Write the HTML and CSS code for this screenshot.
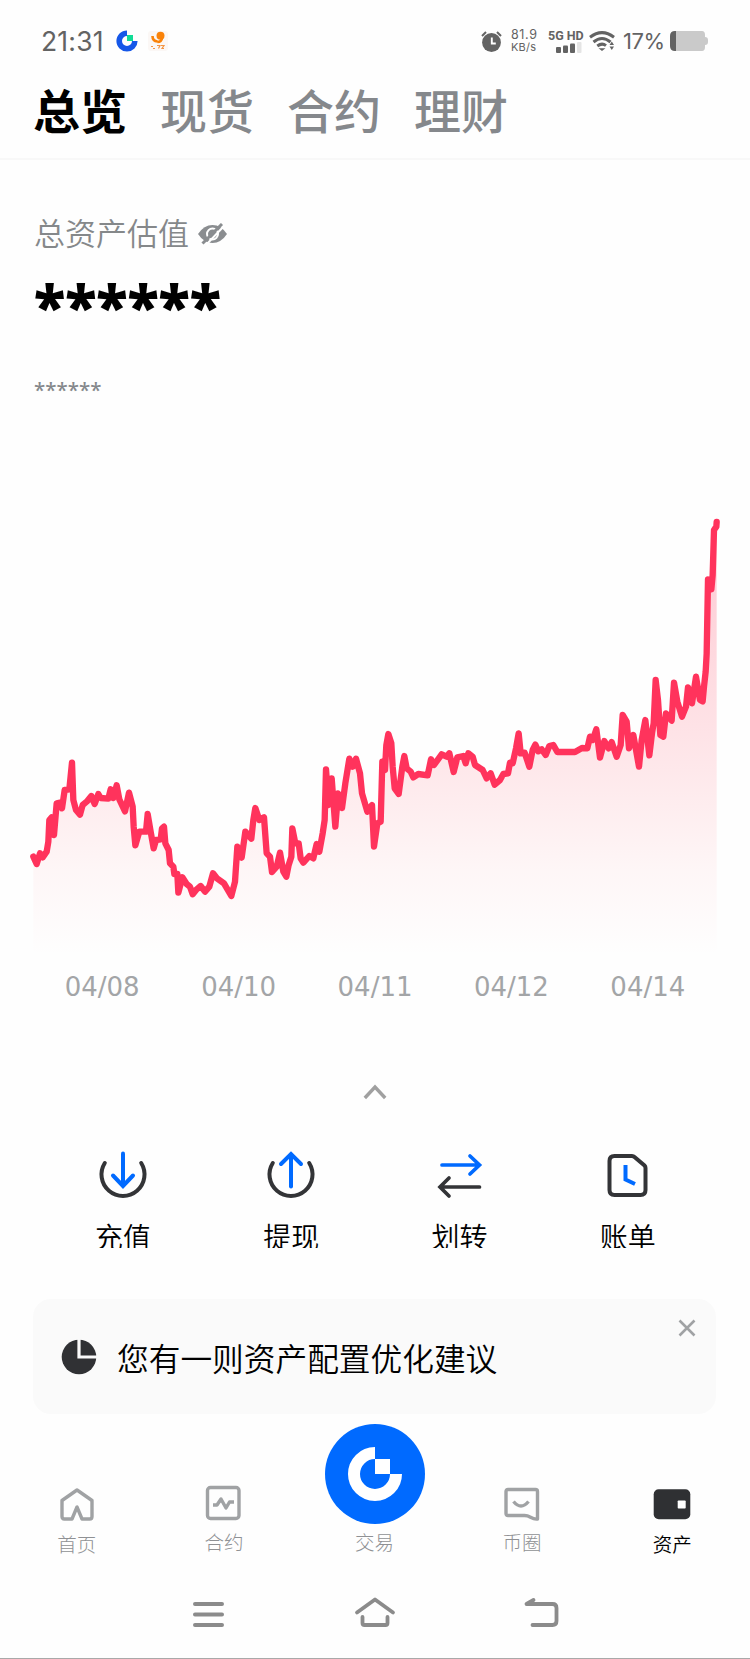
FILE: index.html
```html
<!DOCTYPE html>
<html lang="zh-CN">
<head>
<meta charset="utf-8">
<title>资产总览</title>
<link rel="stylesheet" href="styles.css">
</head>
<body>
<div class="screen">
  <header class="status">
    <span class="clock">21:31</span>
    <svg class="brand-mini" width="22" height="22" viewBox="0 0 22 22"><path d="M11 3.2A7.8 7.8 0 1 0 18.8 11" fill="none" stroke="#1557e8" stroke-width="5.6"/><path d="M11 5h6v6h-6z" fill="#10dc96"/></svg>
    <svg class="app-mini" width="20" height="20" viewBox="0 0 20 20"><rect width="20" height="20" rx="3" fill="#fbf7f5"/><circle cx="12.5" cy="4.800" r="4" fill="#fa8208"/><path d="M4.500 5q0 5 5 5.500M9.500 11q4 0 4.500-4" fill="none" stroke="#fa8208" stroke-width="2.600"/><path d="M3 15.500h2M5 17.500h2M9 14.500h3l-1.500 3M13 14.500h3l-2 3h2" fill="none" stroke="#f49543" stroke-width="1.200"/></svg>
    <span class="spacer"></span>
    <svg class="alarm" width="21" height="21" viewBox="0 0 21 21"><circle cx="10.5" cy="11.5" r="9.4" fill="#636363"/><path d="M1 5 5 1M20 5 16 1" stroke="#636363" stroke-width="2"/><path d="M10.8 6.5v6h4" fill="none" stroke="#fff" stroke-width="1.9"/></svg>
    <div class="speed"><span>81.9</span><span>KB/s</span></div>
    <div class="cell"><span>5G HD</span>
      <svg width="26" height="11" viewBox="0 0 26 11"><g fill="#636363"><rect y="5" width="5" height="6" rx="1"/><rect x="7" y="3.5" width="5" height="7.5" rx="1"/><rect x="14" y="1.5" width="5" height="9.5" rx="1"/></g><rect x="21" width="4.5" height="11" rx="1" fill="#e4e4e4"/></svg>
    </div>
    <svg class="wifi" width="26" height="20" viewBox="0 0 26 20"><g fill="none" stroke="#636363" stroke-width="3"><path d="M1 6.2Q13-3 25 6.2"/><path d="M4.5 11Q13 4 21.5 11"/><path d="M8.3 15Q13 11.500 17 14.600"/></g><path d="M9.500 17.200h7L13 20zM20.500 14l2.300-3.500L25 14zM20.500 15.500l2.300 3.500L25 15.500z" fill="#636363"/></svg>
    <span class="percent">17%</span>
    <svg class="battery" width="38" height="20" viewBox="0 0 38 20"><path d="M4 0h28q3 0 3 4v2q3 0 3 3v2q0 3-3 3v2q0 4-3 4H4z" fill="#cacaca"/><path d="M6 0v20H5q-5 0-5-5V5q0-5 5-5z" fill="#636363"/></svg>
  </header>

  <nav class="tabs">
    <a class="tab tab-active">总览</a><a class="tab">现货</a><a class="tab">合约</a><a class="tab">理财</a>
  </nav>

  <section class="balance">
    <div class="balance-label"><span>总资产估值</span>
      <svg width="29" height="22" viewBox="0 0 29 22"><path d="M0 11Q6 2 14.500 2T29 11Q23 20 14.500 20T0 11z" fill="#8a8d90"/><circle cx="14.500" cy="11" r="5.500" fill="none" stroke="#fff" stroke-width="2"/><path d="M8 22 27 2" stroke="#fff" stroke-width="2"/><path d="M4.500 20.500 24 1" stroke="#8a8d90" stroke-width="3"/></svg>
    </div>
    <div class="balance-main">******</div>
    <div class="balance-sub">******</div>
  </section>

  <svg class="chart" width="750" height="460" viewBox="0 0 2250 1380">
    <defs>
      <linearGradient id="fade" gradientUnits="userSpaceOnUse" x1="0" y1="60" x2="0" y2="1370">
        <stop offset="0" stop-color="#ff335c" stop-opacity=".27"/>
        <stop offset=".5" stop-color="#ff3350" stop-opacity=".13"/>
        <stop offset=".8" stop-color="#ff3344" stop-opacity=".04"/>
        <stop offset="1" stop-color="#ff3344" stop-opacity="0"/>
      </linearGradient>
      <path id="trend" d="M100 1070L110 1092 120 1060 128 1072 140 1055 145 1025 148 960 155 952 162 1005 170 910 180 908 186 925 194 870 208 868 216 788 220 900 228 930 240 944 248 915 260 905 274 888 284 912 295 882 302 894 325 896 332 868 340 894 350 856 358 898 375 934 387 878 398 920 401 980 406 1036 418 995 438 995 443 942 452 995 461 1045 468 1020 482 1018 486 985 492 980 496 1030 506 1050 510 1090 520 1100 523 1122 532 1122 535 1178 547 1132 560 1152 570 1160 578 1183 590 1168 602 1158 615 1175 628 1160 639 1120 652 1136 672 1150 694 1188 705 1145 712 1040 725 1073 736 995 754 1016 760 960 766 924 778 960 792 952 800 1060 810 1070 816 1116 830 1100 840 1058 850 1115 859 1130 866 1095 874 1070 877 985 886 1030 896 1030 902 1075 910 1088 928 1068 940 1075 950 1032 958 1055 968 1000 974 960 978 808 986 915 995 835 1006 980 1014 880 1026 924 1036 850 1048 776 1058 800 1068 776 1080 820 1086 880 1102 935 1116 915 1122 1040 1132 970 1142 965 1147 785 1155 810 1159 735 1165 702 1174 730 1178 800 1184 865 1196 882 1207 800 1213 768 1220 805 1232 815 1240 832 1255 822 1283 826 1293 778 1302 795 1325 763 1340 770 1348 760 1361 816 1372 772 1390 768 1397 790 1405 760 1418 770 1425 795 1448 810 1460 835 1472 820 1484 854 1500 840 1510 822 1524 820 1530 788 1538 790 1548 745 1556 700 1562 760 1574 758 1588 800 1598 750 1606 734 1615 754 1625 748 1637 765 1648 738 1660 735 1672 756 1725 756 1746 744 1762 745 1770 710 1778 720 1789 688 1800 773 1813 723 1826 745 1835 726 1850 770 1862 735 1868 645 1880 665 1887 745 1900 705 1917 800 1925 720 1936 660 1948 766 1956 700 1961 670 1967 540 1974 600 1981 705 1990 710 1998 640 2015 662 2022 548 2032 605 2046 650 2058 620 2064 562 2076 610 2088 530 2100 600 2108 604 2112 560 2117 515 2120 460 2124 238 2134 268 2138 225 2142 90 2149 80 2150 66"/>
    </defs>
    <path d="M100 1070L110 1092 120 1060 128 1072 140 1055 145 1025 148 960 155 952 162 1005 170 910 180 908 186 925 194 870 208 868 216 788 220 900 228 930 240 944 248 915 260 905 274 888 284 912 295 882 302 894 325 896 332 868 340 894 350 856 358 898 375 934 387 878 398 920 401 980 406 1036 418 995 438 995 443 942 452 995 461 1045 468 1020 482 1018 486 985 492 980 496 1030 506 1050 510 1090 520 1100 523 1122 532 1122 535 1178 547 1132 560 1152 570 1160 578 1183 590 1168 602 1158 615 1175 628 1160 639 1120 652 1136 672 1150 694 1188 705 1145 712 1040 725 1073 736 995 754 1016 760 960 766 924 778 960 792 952 800 1060 810 1070 816 1116 830 1100 840 1058 850 1115 859 1130 866 1095 874 1070 877 985 886 1030 896 1030 902 1075 910 1088 928 1068 940 1075 950 1032 958 1055 968 1000 974 960 978 808 986 915 995 835 1006 980 1014 880 1026 924 1036 850 1048 776 1058 800 1068 776 1080 820 1086 880 1102 935 1116 915 1122 1040 1132 970 1142 965 1147 785 1155 810 1159 735 1165 702 1174 730 1178 800 1184 865 1196 882 1207 800 1213 768 1220 805 1232 815 1240 832 1255 822 1283 826 1293 778 1302 795 1325 763 1340 770 1348 760 1361 816 1372 772 1390 768 1397 790 1405 760 1418 770 1425 795 1448 810 1460 835 1472 820 1484 854 1500 840 1510 822 1524 820 1530 788 1538 790 1548 745 1556 700 1562 760 1574 758 1588 800 1598 750 1606 734 1615 754 1625 748 1637 765 1648 738 1660 735 1672 756 1725 756 1746 744 1762 745 1770 710 1778 720 1789 688 1800 773 1813 723 1826 745 1835 726 1850 770 1862 735 1868 645 1880 665 1887 745 1900 705 1917 800 1925 720 1936 660 1948 766 1956 700 1961 670 1967 540 1974 600 1981 705 1990 710 1998 640 2015 662 2022 548 2032 605 2046 650 2058 620 2064 562 2076 610 2088 530 2100 600 2108 604 2112 560 2117 515 2120 460 2124 238 2134 268 2138 225 2142 90 2149 80 2150 66V1370H100z" fill="url(#fade)"/>
    <use href="#trend" fill="none" stroke="#ff335c" stroke-width="19" stroke-linecap="round" stroke-linejoin="round"/>
  </svg>
  <div class="dates"><span>04/08</span><span>04/10</span><span>04/11</span><span>04/12</span><span>04/14</span></div>

  <div class="collapse"><svg width="24" height="16" viewBox="0 0 24 16"><path d="M1.800 14 12 3l10.200 11" fill="none" stroke="#a0a0a0" stroke-width="3.400"/></svg></div>

  <section class="actions">
    <div class="action">
      <svg width="50" height="50" viewBox="0 0 50 50" fill="none" stroke-width="4" stroke-linecap="round"><path d="M6.800 13A21.500 21.500 0 1 0 43.200 13" stroke="#333437"/><path d="M25 3.500v32" stroke="#006aff"/><path d="M15 25.500 25 36l10-10.500" stroke="#006aff"/></svg>
      <span>充值</span></div>
    <div class="action">
      <svg width="50" height="50" viewBox="0 0 50 50" fill="none" stroke-width="4" stroke-linecap="round"><path d="M6.800 13A21.500 21.500 0 1 0 43.200 13" stroke="#333437"/><path d="M25 4.500v32" stroke="#006aff"/><path d="M15 14 25 4l10 10" stroke="#006aff"/></svg>
      <span>提现</span></div>
    <div class="action">
      <svg width="50" height="50" viewBox="0 0 50 50" fill="none" stroke-width="3.700" stroke-linecap="round"><path d="M7 15H44M35 6l9.500 9-9.500 9" stroke="#006aff"/><path d="M44.500 37H6M14 28l-9 9 9 9" stroke="#333437"/></svg>
      <span>划转</span></div>
    <div class="action">
      <svg width="50" height="50" viewBox="0 0 50 50" fill="none" stroke-width="4"><path d="M11.500 6H29q1.500 0 2.500 1l10 8.500q1 1 1 2.500v22q0 5-5 5h-26q-5 0-5-5V11q0-5 5-5z" stroke="#333437"/><path d="M22.500 15v14.500l9.500 4.500" stroke="#006aff"/></svg>
      <span>账单</span></div>
  </section>

  <aside class="notice">
    <svg class="pie" width="36" height="36" viewBox="0 0 36 36"><circle cx="18" cy="18" r="17.300" fill="#303134"/><path d="M18 0v18h18" fill="none" stroke="#fafafa" stroke-width="3.200"/></svg>
    <span class="notice-text">您有一则资产配置优化建议</span>
    <svg class="close" width="18" height="18" viewBox="0 0 18 18"><path d="M1.500 1.500l15 15M16.500 1.500l-15 15" stroke="#a0a2a4" stroke-width="2.600"/></svg>
  </aside>

  <nav class="bottom">
    <div class="item">
      <svg width="38" height="38" viewBox="0 0 38 38" fill="none" stroke="#a0a2a4" stroke-width="3.400" stroke-linejoin="round"><path d="M19 6 34 16.500V32.500q0 2.500-2.300 2.500H24L19 23l-5 12H6.300Q4 35 4 32.500V16.500z"/></svg>
      <span>首页</span></div>
    <div class="item item-raised">
      <svg width="38" height="38" viewBox="0 0 38 38" fill="none" stroke="#a0a2a4" stroke-width="3.400"><rect x="2.500" y="3.500" width="31.500" height="31" rx="3"/><path d="M8 21h4l4-6 5 9 3.500-6H29" stroke-linejoin="round"/></svg>
      <span>合约</span></div>
    <div class="item item-trade">
      <div class="trade"><svg width="54" height="54" viewBox="0 0 54 54"><path d="M27 6A21 21 0 1 0 48 27" fill="none" stroke="#fff" stroke-width="12"/><path d="M27 12h15v15H27z" fill="#fff"/></svg></div>
      <span>交易</span></div>
    <div class="item item-raised">
      <svg width="38" height="38" viewBox="0 0 38 38" fill="none" stroke="#a0a2a4" stroke-width="3.400" stroke-linejoin="round"><path d="M5 5.500h27.500q2 0 2 2V35q-3 .5-7-1.800-3-1.700-6-1.700H5q-2 0-2-2v-22q0-2 2-2z"/><path d="M10.500 17.500q7.500 9 15 0"/></svg>
      <span>币圈</span></div>
    <div class="item item-active">
      <svg width="38" height="38" viewBox="0 0 38 38"><rect x=".7" y="5.200" width="36.600" height="30" rx="5" fill="#2f3033"/><rect x="24.700" y="16.500" width="8" height="8" rx=".8" fill="#fff"/></svg>
      <span>资产</span></div>
  </nav>

  <footer class="system">
    <svg width="42" height="38" viewBox="0 0 42 38" fill="none" stroke="#8b8b8b" stroke-width="4" stroke-linecap="round"><path d="M8 9h27M8 19.500h27M8 30h27"/></svg>
    <svg width="42" height="38" viewBox="0 0 42 38" fill="none" stroke="#8b8b8b" stroke-width="3.800" stroke-linecap="round" stroke-linejoin="round"><path d="M3 17.500 21 4.500l18 13M8.500 22v6q0 2 2 2h21q2 0 2-2v-6"/></svg>
    <svg width="42" height="38" viewBox="0 0 42 38" fill="none" stroke="#8b8b8b" stroke-width="3.800" stroke-linecap="round" stroke-linejoin="round"><path d="M11.500 30h20q4 0 4-4V13q0-4-4-4h-26l7-4"/></svg>
  </footer>
</div>
</body>
</html>
```

FILE: styles.css
```css
* { box-sizing: border-box; }
body {
  margin: 0;
  background: #fefefe;
  color: #000;
  font-family: "Noto Sans CJK SC", sans-serif;
}
svg { display: block; flex: none; }
.screen {
  width: 750px;
  height: 1659px;
  display: flex;
  flex-direction: column;
  overflow: hidden;
  border-bottom: 1px solid #a9a9a9;
}
.status {
  height: 82px;
  flex: none;
  display: flex;
  align-items: center;
  padding: 0 42px 0 41px;
  color: #636363;
  font-family: Inter, sans-serif;
}
.clock { width: 64px; font-size: 26.500px; letter-spacing: .2px; white-space: nowrap; }
.brand-mini { margin-left: 11px; }
.app-mini { margin-left: 10px; }
.spacer { flex: 1; }
.alarm { margin-right: 9px; }
.speed {
  width: 27px;
  display: flex;
  flex-direction: column;
  font-size: 12px;
  line-height: 12px;
  white-space: nowrap;
}
.speed span:first-child { font-size: 12.500px; letter-spacing: .6px; }
.speed span:last-child { font-size: 11px; letter-spacing: .2px; }
.cell {
  width: 35px;
  margin-left: 10px;
  display: flex;
  flex-direction: column;
  font: 700 12.500px/13px Roboto, sans-serif;
  white-space: nowrap;
}
.cell svg { margin-left: 8px; }
.wifi { margin-left: 6px; }
.percent { width: 41px; margin-left: 8px; font-size: 22px; letter-spacing: -.5px; white-space: nowrap; }
.battery { margin-left: 6px; }
.tabs {
  height: 78px;
  flex: none;
  display: flex;
  gap: 33px;
  padding-left: 33px;
  border-bottom: 2px solid #f8f8f8;
}
.tab { font-size: 47px; line-height: 54px; font-weight: 500; color: #85888c; }
.tab-active { font-weight: 700; color: #000; }
.balance {
  height: 340px;
  flex: none;
  padding: 51px 0 0 34px;
  display: flex;
  flex-direction: column;
}
.balance-label {
  height: 46px;
  display: flex;
  align-items: center;
  gap: 9px;
  font-size: 31px;
  font-weight: 350;
  color: #85888a;
}
.balance-label span { line-height: 42px; padding-bottom: 4px; }
.balance-main {
  height: 104px;
  padding-top: 14px;
  font: 900 58px/70px "Noto Sans", sans-serif;
}
.balance-sub { padding-top: 5px; font: 500 20.500px/46px "Noto Sans", sans-serif; color: #85888c; }
.chart { height: 460px; }
.dates {
  height: 54px;
  flex: none;
  padding: 0 34px;
  display: flex;
  align-items: center;
}
.dates span { flex: 1; text-align: center; font: 26px/30px "DejaVu Sans", sans-serif; color: #a3a5a7; }
.collapse { height: 136px; flex: none; display: flex; justify-content: center; padding-top: 70px; }
.actions {
  height: 98px;
  flex: none;
  padding: 0 38px 0 39px;
  display: flex;
  overflow: hidden;
}
.action { flex: 1; display: flex; flex-direction: column; align-items: center; }
.action span { margin-top: 16px; font-size: 28px; line-height: 40px; font-weight: 350; }
.notice {
  height: 115px;
  flex: none;
  margin: 51px 34px 0 33px;
  padding: 0 20px 0 28px;
  display: flex;
  align-items: center;
  border-radius: 18px;
  background: #fafafa;
}
.notice-text { flex: 1; margin-left: 20px; font-size: 31.700px; font-weight: 350; white-space: nowrap; }
.close { align-self: flex-start; margin-top: 20px; }
.bottom {
  height: 156px;
  flex: none;
  padding: 0 4px 0 3px;
  display: flex;
}
.item {
  flex: 1;
  display: flex;
  flex-direction: column;
  align-items: center;
  padding-top: 70px;
  font-size: 19.500px;
  line-height: 28px;
  font-weight: 300;
  color: #8f9194;
}
.item span { margin-top: 8px; }
.item-raised { padding-right: 3px; }
.item-raised span { margin-top: 6px; }
.item-trade { padding-top: 10px; }
.item-trade span { margin-top: 4px; }
.item-active { color: #000; font-weight: 350; }
.trade {
  width: 100px;
  height: 100px;
  border-radius: 50%;
  background: #006aff;
  display: flex;
  align-items: center;
  justify-content: center;
}
.system {
  flex: 1;
  padding: 25px 187px 0;
  display: flex;
  justify-content: space-between;
}
```
